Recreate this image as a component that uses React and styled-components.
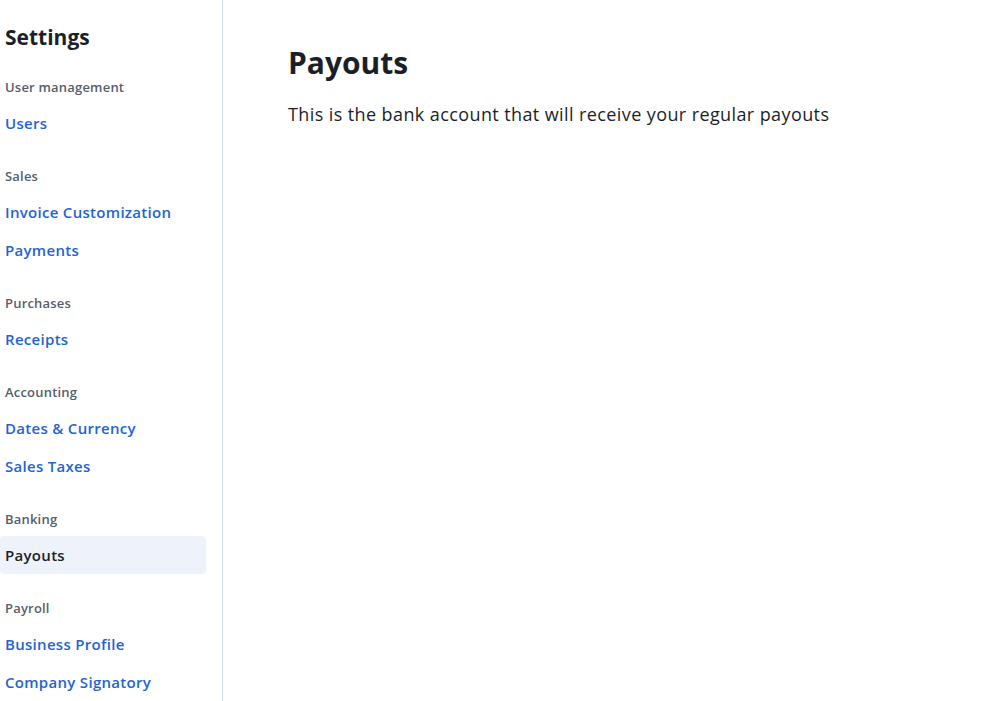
import styled, { createGlobalStyle } from "styled-components"

const Global = createGlobalStyle`
  body {
    margin: 0;
    background: #fff;
    font-family: "Open Sans", "Noto Sans", sans-serif;
  }
`;

const Page = styled.div`
  display: flex;
  min-height: 701px;
`;

const Sidebar = styled.nav`
  width: 206px;
  padding: 23px 16px 0 0;
  border-right: 1px solid #d4dde9;
  flex-shrink: 0;
`;

const Title = styled.h2`
  margin: 0 0 27px 5px;
  font-size: 21px;
  line-height: 28px;
  font-weight: 700;
  color: #1a1f29;
`;

const Group = styled.div`
  margin-bottom: 25px;
`;

const Label = styled.div`
  padding-left: 5px;
  margin-bottom: 8px;
  font-size: 13px;
  line-height: 18px;
  font-weight: 600;
  letter-spacing: 0.2px;
  color: #565d6b;
`;

const Link = styled.a`
  display: flex;
  align-items: center;
  height: 38px;
  padding-left: 5px;
  border-radius: 4px;
  font-size: 15px;
  font-weight: 600;
  letter-spacing: 0.3px;
  text-decoration: none;
  cursor: pointer;
  color: ${(p) => (p.$active ? "#1a1f29" : "#1f64d3")};
  background: ${(p) => (p.$active ? "#eef2fa" : "transparent")};
`;

const Main = styled.main`
  flex: 1;
  padding: 44px 0 0 65px;
`;

const Heading = styled.h1`
  margin: 0 0 20px;
  font-size: 30px;
  line-height: 38px;
  font-weight: 700;
  color: #1a1f29;
`;

const Text = styled.p`
  margin: 0;
  font-size: 18px;
  line-height: 24px;
  letter-spacing: 0.4px;
  color: #1a1f29;
`;

const groups = [
  { label: "User management", links: ["Users"] },
  { label: "Sales", links: ["Invoice Customization", "Payments"] },
  { label: "Purchases", links: ["Receipts"] },
  { label: "Accounting", links: ["Dates & Currency", "Sales Taxes"] },
  { label: "Banking", links: ["Payouts"] },
  { label: "Payroll", links: ["Business Profile", "Company Signatory"] },
];

function App() {
  return (
    <Page>
      <Global />
      <Sidebar>
        <Title>Settings</Title>
        {groups.map((g) => (
          <Group key={g.label}>
            <Label>{g.label}</Label>
            {g.links.map((l) => (
              <Link key={l} $active={l === "Payouts"}>{l}</Link>
            ))}
          </Group>
        ))}
      </Sidebar>
      <Main>
        <Heading>Payouts</Heading>
        <Text>This is the bank account that will receive your regular payouts</Text>
      </Main>
    </Page>
  )
}

export default App;
